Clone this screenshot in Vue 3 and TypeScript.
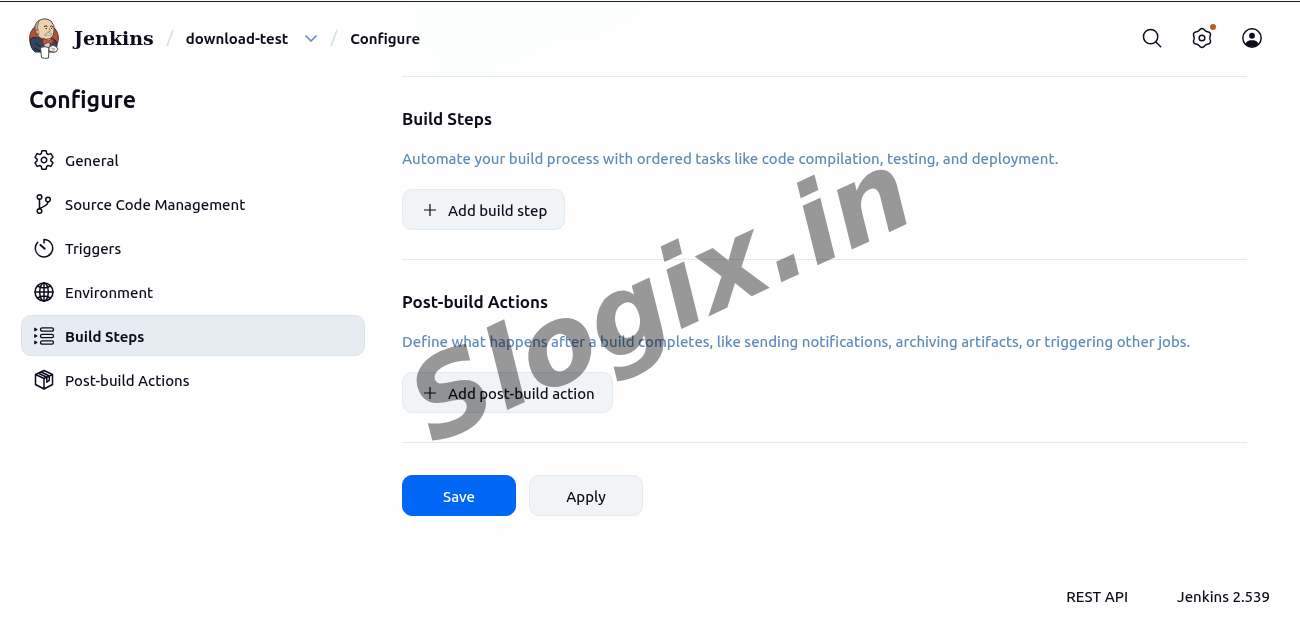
<script setup lang="ts">
import { ref } from 'vue'

interface NavItem {
  id: string
  label: string
}

interface Section {
  title: string
  description: string
  action: string
}

const items: NavItem[] = [
  { id: 'general', label: 'General' },
  { id: 'scm', label: 'Source Code Management' },
  { id: 'triggers', label: 'Triggers' },
  { id: 'environment', label: 'Environment' },
  { id: 'steps', label: 'Build Steps' },
  { id: 'post', label: 'Post-build Actions' },
]

const sections: Section[] = [
  {
    title: 'Build Steps',
    description:
      'Automate your build process with ordered tasks like code compilation, testing, and deployment.',
    action: 'Add build step',
  },
  {
    title: 'Post-build Actions',
    description:
      'Define what happens after a build completes, like sending notifications, archiving artifacts, or triggering other jobs.',
    action: 'Add post-build action',
  },
]

const active = ref('steps')

// Six-lobed outline of the "manage" gear, centred in a 24 unit box
const gearPath =
  Array.from({ length: 72 }, (_, i) => {
    const t = (i * Math.PI) / 36
    const r = 9.4 + 0.9 * Math.cos(6 * (t - Math.PI / 2))
    return `${i ? 'L' : 'M'}${(12 + r * Math.cos(t)).toFixed(2)} ${(12 - r * Math.sin(t)).toFixed(2)}`
  }).join('') + 'Z'
</script>

<template>
  <div class="page">
    <header class="header">
      <div class="tint"></div>
      <a href="#" class="brand">
        <svg class="logo" viewBox="0 0 30 41" aria-hidden="true">
          <ellipse cx="15" cy="20" rx="14.5" ry="14.5" fill="#b4532f" stroke="#4c2a24" stroke-width=".8" />
          <path d="M1 22 Q3 18 9 20 L23 20 Q28 22 28 28 L26 34 L6 34 Q1 30 1 22Z" fill="#34455b" stroke="#1c2430" stroke-width=".9" />
          <path d="M14 20 L16 30 L20 30 L22 20Z" fill="#c9d3dc" />
          <path d="M7 15 Q4 6 10 2.500 Q16 -1 22 3 Q26 7 25 13 Q25 19 20 21 Q14 23 10 19Z" fill="#eed1b1" stroke="#41352f" stroke-width=".9" />
          <path d="M7 16 Q4 6 10 2.500 Q7 9 10 16Z" fill="#b9aca0" stroke="#4e4440" stroke-width=".6" />
          <path d="M9 12 Q6 11 7 14.500 Q8 17 10 16" fill="#e2b996" stroke="#41352f" stroke-width=".7" />
          <path d="M15 8.500 Q17 7.300 18.500 8.500 M21 8.500 Q23 7.500 24 9 M16.500 10.500h1.500 M22 10.500h1" fill="none" stroke="#302724" stroke-width="1" />
          <path d="M20 10 Q22 13 20.500 14 L18.500 14" fill="none" stroke="#93664d" stroke-width=".8" />
          <path d="M16 16 Q19 13.500 23 16 L21 17.500 Q18 16 16 18Z" fill="#eee" stroke="#766c66" stroke-width=".6" />
          <path d="M14 20 L19 23 L24 20.500 L24 26 L19 24.500 L14 27Z" fill="#d3552b" stroke="#722b20" stroke-width=".8" />
          <path d="M6 25 Q10 28 12 29 M5 30 L11 33" fill="none" stroke="#182230" stroke-width="1" />
          <path d="M11.500 29.500 Q15 28 20 29.500 L19.500 40 Q15 41 12.500 39.500Z" fill="#fff" stroke="#353535" stroke-width=".9" />
          <path d="M20 29 Q24 26 27 28.500 L29 31 L27 34 L24 34 L20 33Z" fill="#fbf4ec" stroke="#484040" stroke-width=".9" />
          <path d="M22 30l4 1 M23 32h3" stroke="#8e7160" stroke-width=".6" />
        </svg>
        <span class="brand-name">Jenkins</span>
      </a>
      <nav class="crumbs" aria-label="Breadcrumb">
        <svg class="slash" viewBox="0 0 8 18" aria-hidden="true"><path d="M7 1 1 17" /></svg>
        <a href="#" class="crumb job">download-test</a>
        <button type="button" class="chevron" aria-label="Open download-test menu">
          <svg viewBox="0 0 14 8"><path d="M1.500 1.500 7 7l5.500-5.500" /></svg>
        </button>
        <svg class="slash" viewBox="0 0 8 18" aria-hidden="true"><path d="M7 1 1 17" /></svg>
        <a href="#" class="crumb">Configure</a>
      </nav>
      <div class="tools">
        <button type="button" class="tool" aria-label="Search">
          <svg class="icon" viewBox="0 0 24 24"><circle cx="10.500" cy="10.500" r="7.800" /><path d="m16 16 5.500 5.500" /></svg>
        </button>
        <button type="button" class="tool" aria-label="Manage Jenkins">
          <svg class="icon" viewBox="0 0 24 24"><path :d="gearPath" /><circle cx="12" cy="12" r="3.100" /></svg>
          <span class="dot"></span>
        </button>
        <button type="button" class="tool" aria-label="Account">
          <svg class="icon" viewBox="0 0 24 24">
            <circle cx="12" cy="12" r="10" />
            <circle class="solid" cx="12" cy="9.500" r="3.200" />
            <path class="solid" d="M5 18.500c1.500-3.500 4-4 7-4s5.500.5 7 4c-3.500 4-10.500 4-14 0Z" />
          </svg>
        </button>
      </div>
    </header>

    <div class="body">
      <aside class="side">
        <h1>Configure</h1>
        <nav class="menu" aria-label="Configure sections">
          <button
            v-for="item in items"
            :key="item.id"
            type="button"
            class="item"
            :class="{ active: item.id === active }"
            @click="active = item.id"
          >
            <svg v-if="item.id === 'general'" class="glyph wide" viewBox="0 0 512 512">
              <path d="M262.29 192.31a64 64 0 1057.4 57.4 64.13 64.13 0 00-57.4-57.4zM416.39 256a154.34 154.34 0 01-1.530 20.790l45.210 35.460a10.810 10.810 0 012.450 13.750l-42.770 74a10.810 10.810 0 01-13.140 4.590l-44.900-18.080a16.110 16.110 0 00-15.170 1.750A164.480 164.480 0 01325 400.800a15.940 15.940 0 00-8.820 12.140l-6.730 47.890a11.080 11.080 0 01-10.680 9.170h-85.540a11.110 11.110 0 01-10.690-8.870l-6.720-47.820a16.070 16.070 0 00-9-12.220 155.300 155.300 0 01-21.460-12.570 16 16 0 00-15.110-1.710l-44.890 18.070a10.810 10.810 0 01-13.140-4.580l-42.770-74a10.800 10.800 0 012.450-13.750l38.210-30a16.050 16.050 0 006-14.080c-.36-4.170-.58-8.330-.58-12.500s.21-8.270.58-12.350a16 16 0 00-6.070-13.940l-38.190-30A10.810 10.810 0 0149.480 186l42.770-74a10.810 10.810 0 0113.140-4.590l44.900 18.080a16.110 16.110 0 0015.170-1.750A164.480 164.480 0 01187 111.200a15.940 15.940 0 008.820-12.140l6.730-47.890A11.080 11.080 0 01213.230 42h85.540a11.110 11.110 0 0110.690 8.870l6.720 47.820a16.070 16.070 0 009 12.220 155.300 155.300 0 0121.460 12.570 16 16 0 0015.110 1.710l44.890-18.070a10.810 10.810 0 0113.140 4.580l42.770 74a10.800 10.800 0 01-2.450 13.750l-38.210 30a16.050 16.050 0 00-6.050 14.080c.33 4.140.55 8.300.55 12.470z" />
            </svg>
            <svg v-else-if="item.id === 'scm'" class="glyph" viewBox="0 0 22 22">
              <circle cx="6.500" cy="4" r="2.300" /><circle cx="6.500" cy="18" r="2.300" /><circle cx="15" cy="6.500" r="2.300" />
              <path d="M6.500 6.300v9.400M15 8.800c0 4-4.500 4.200-8.300 7" />
            </svg>
            <svg v-else-if="item.id === 'triggers'" class="glyph" viewBox="0 0 22 22">
              <path d="M11 6V2.500a8.700 8.700 0 1 1-6.300 2.700" /><path class="needle" d="m7.500 8 4.200 3.800" />
            </svg>
            <svg v-else-if="item.id === 'environment'" class="glyph" viewBox="0 0 22 22">
              <circle cx="11" cy="11" r="9" /><ellipse cx="11" cy="11" rx="4.300" ry="9" />
              <path d="M11 2v18M2 11h18M4.500 5q6.500 4 13 0M4.500 17q6.500-4 13 0" />
            </svg>
            <svg v-else-if="item.id === 'steps'" class="glyph list" viewBox="0 0 22 22">
              <rect x="7.500" y="2.800" width="13" height="3.400" rx="1.700" /><rect x="7.500" y="9.300" width="13" height="3.400" rx="1.700" /><rect x="7.500" y="15.800" width="13" height="3.400" rx="1.700" />
              <path d="M1.800 3.300v2.400l2-1.200zM1.800 9.800v2.400l2-1.200zM1.800 16.300v2.400l2-1.200z" />
            </svg>
            <svg v-else class="glyph" viewBox="0 0 22 22">
              <path d="M11 1.500 19.500 5.500v10L11 20 2.500 15.500V5.500ZM2.500 5.500 11 9.500l8.500-4M11 9.500v10.500M5.500 4.200l8.300 4v5l2.500-1.800V7L8.300 3" />
            </svg>
            <span class="label">{{ item.label }}</span>
          </button>
        </nav>
      </aside>

      <main class="main">
        <section v-for="section in sections" :key="section.title" class="section">
          <h2>{{ section.title }}</h2>
          <p>{{ section.description }}</p>
          <button type="button" class="btn add">
            <svg class="plus" viewBox="0 0 12 12" aria-hidden="true"><path d="M6 0v12M0 6h12" /></svg>
            <span class="label">{{ section.action }}</span>
          </button>
        </section>
        <div class="actions">
          <button type="submit" class="btn primary"><span class="label">Save</span></button>
          <button type="button" class="btn"><span class="label">Apply</span></button>
        </div>
      </main>
    </div>

    <footer class="footer">
      <a href="#">REST API</a>
      <a href="#">Jenkins 2.539</a>
    </footer>

    <div class="watermark">Slogix.in</div>
  </div>
</template>

<style>
body {
  margin: 0;
  background: #fefefe;
}
</style>

<style scoped>
.page {
  position: relative;
  display: flex;
  flex-direction: column;
  min-height: 100vh;
  box-sizing: border-box;
  overflow: hidden;
  border-top: 1px solid #fefefe;
  background: #fefefe;
  color: #0c0c1a;
  font-family: Ubuntu, "Noto Sans", sans-serif;
  font-size: 15px;
  font-weight: 500;
  line-height: 24px;
}

a {
  color: inherit;
  text-decoration: none;
}

button {
  font: inherit;
  color: inherit;
  cursor: pointer;
}

.header {
  position: relative;
  display: flex;
  align-items: center;
  height: 75px;
  box-sizing: border-box;
  border-top: 1px solid #1c1c1c;
  padding: 0 37px 2px 29px;
}

.tint {
  position: absolute;
  top: 0;
  left: 407px;
  width: 242px;
  height: 72px;
  background: #fbfefd;
  clip-path: polygon(0 0, 100% 0, 95% 20%, 81% 48%, 64% 54%, 48% 82%, 40% 86%, 32% 100%, 12% 100%, 12% 80%, 6% 60%, 4% 30%);
}

.brand {
  position: relative;
  display: flex;
  align-items: center;
  gap: 15px;
}

.logo {
  width: 30px;
  height: 41px;
}

.brand-name {
  font: bold 19px/24px "DejaVu Serif", serif;
}

.crumbs {
  position: relative;
  display: flex;
  align-items: center;
  margin-left: 12px;
  font-weight: 600;
}

.slash {
  width: 8px;
  height: 18px;
  fill: none;
  stroke: #cfdfe8;
  stroke-width: 1.5;
}

.crumb {
  margin-left: 12px;
  padding-top: 2px;
}

.chevron {
  display: flex;
  margin: 0 12px 0 16px;
  padding: 0;
  border: 0;
  background: none;
}

.chevron svg {
  width: 14px;
  height: 8px;
  fill: none;
  stroke: #6689c4;
  stroke-width: 1.6;
}

.tools {
  display: flex;
  gap: 28px;
  margin-left: auto;
}

.tool {
  position: relative;
  display: flex;
  padding: 0;
  border: 0;
  background: none;
}

.icon {
  width: 22px;
  height: 22px;
  fill: none;
  stroke: #0c0c1a;
  stroke-width: 1.6;
  stroke-linecap: round;
  stroke-linejoin: round;
}

.icon .solid {
  fill: #0c0c1a;
  stroke: none;
}

.dot {
  position: absolute;
  top: -3px;
  right: -3px;
  width: 6px;
  height: 6px;
  border-radius: 50%;
  background: #bd5c27;
}

.body {
  display: flex;
  flex: 1;
}

.side {
  flex: 0 0 344px;
  padding-left: 21px;
}

h1 {
  margin: 8px 0 23px 8px;
  font-size: 23px;
  line-height: 32px;
  font-weight: 700;
}

.menu {
  display: flex;
  flex-direction: column;
  gap: 3px;
}

.item {
  display: flex;
  align-items: center;
  gap: 10px;
  height: 41px;
  padding: 0 12px 0 11px;
  border: 1px solid transparent;
  border-radius: 10px;
  background: none;
  text-align: left;
}

.label {
  padding-top: 2px;
}

.item.active {
  border-color: #d9e4ec;
  background: #e7ecf2;
  font-weight: 600;
}

.glyph {
  width: 22px;
  height: 22px;
  fill: none;
  stroke: #0c0c1a;
  stroke-width: 1.5;
  stroke-linecap: round;
  stroke-linejoin: round;
}

.glyph.wide {
  stroke-width: 34;
}

.glyph .needle {
  stroke-width: 2;
}

.glyph.list {
  stroke-width: 1.3;
}

.main {
  flex: 1;
  min-width: 0;
  padding: 0 53px 0 37px;
}

.section {
  padding: 30px 0 29px;
  border-top: 1px solid #e0eaf1;
}

h2 {
  margin: 0 0 16px;
  font-size: 17px;
  line-height: 24px;
  font-weight: 600;
}

p {
  margin: 0 0 18px;
  color: #5f8ab9;
}

.btn {
  display: flex;
  align-items: center;
  justify-content: center;
  height: 41px;
  min-width: 114px;
  padding: 0 17px;
  border: 1px solid #e3ebf1;
  border-radius: 10px;
  background: #f1f4f7;
}

.btn.add {
  padding-left: 21px;
  gap: 12px;
}

.plus {
  width: 12px;
  height: 12px;
  stroke: #0c0c1a;
  stroke-width: 1.2;
}

.btn.primary {
  border-color: #0066f6;
  background: #0066f6;
  color: #fff;
}

.actions {
  display: flex;
  gap: 13px;
  padding-top: 32px;
  border-top: 1px solid #e0eaf1;
}

.footer {
  display: flex;
  justify-content: flex-end;
  gap: 49px;
  padding: 0 30px 21px;
}

.watermark {
  position: absolute;
  top: 296px;
  left: 660px;
  transform: translate(-50%, -50%) rotate(-25deg);
  color: #999;
  font: italic bold 110px/1 "DejaVu Sans", sans-serif;
  white-space: nowrap;
  mix-blend-mode: multiply;
  pointer-events: none;
}
</style>
